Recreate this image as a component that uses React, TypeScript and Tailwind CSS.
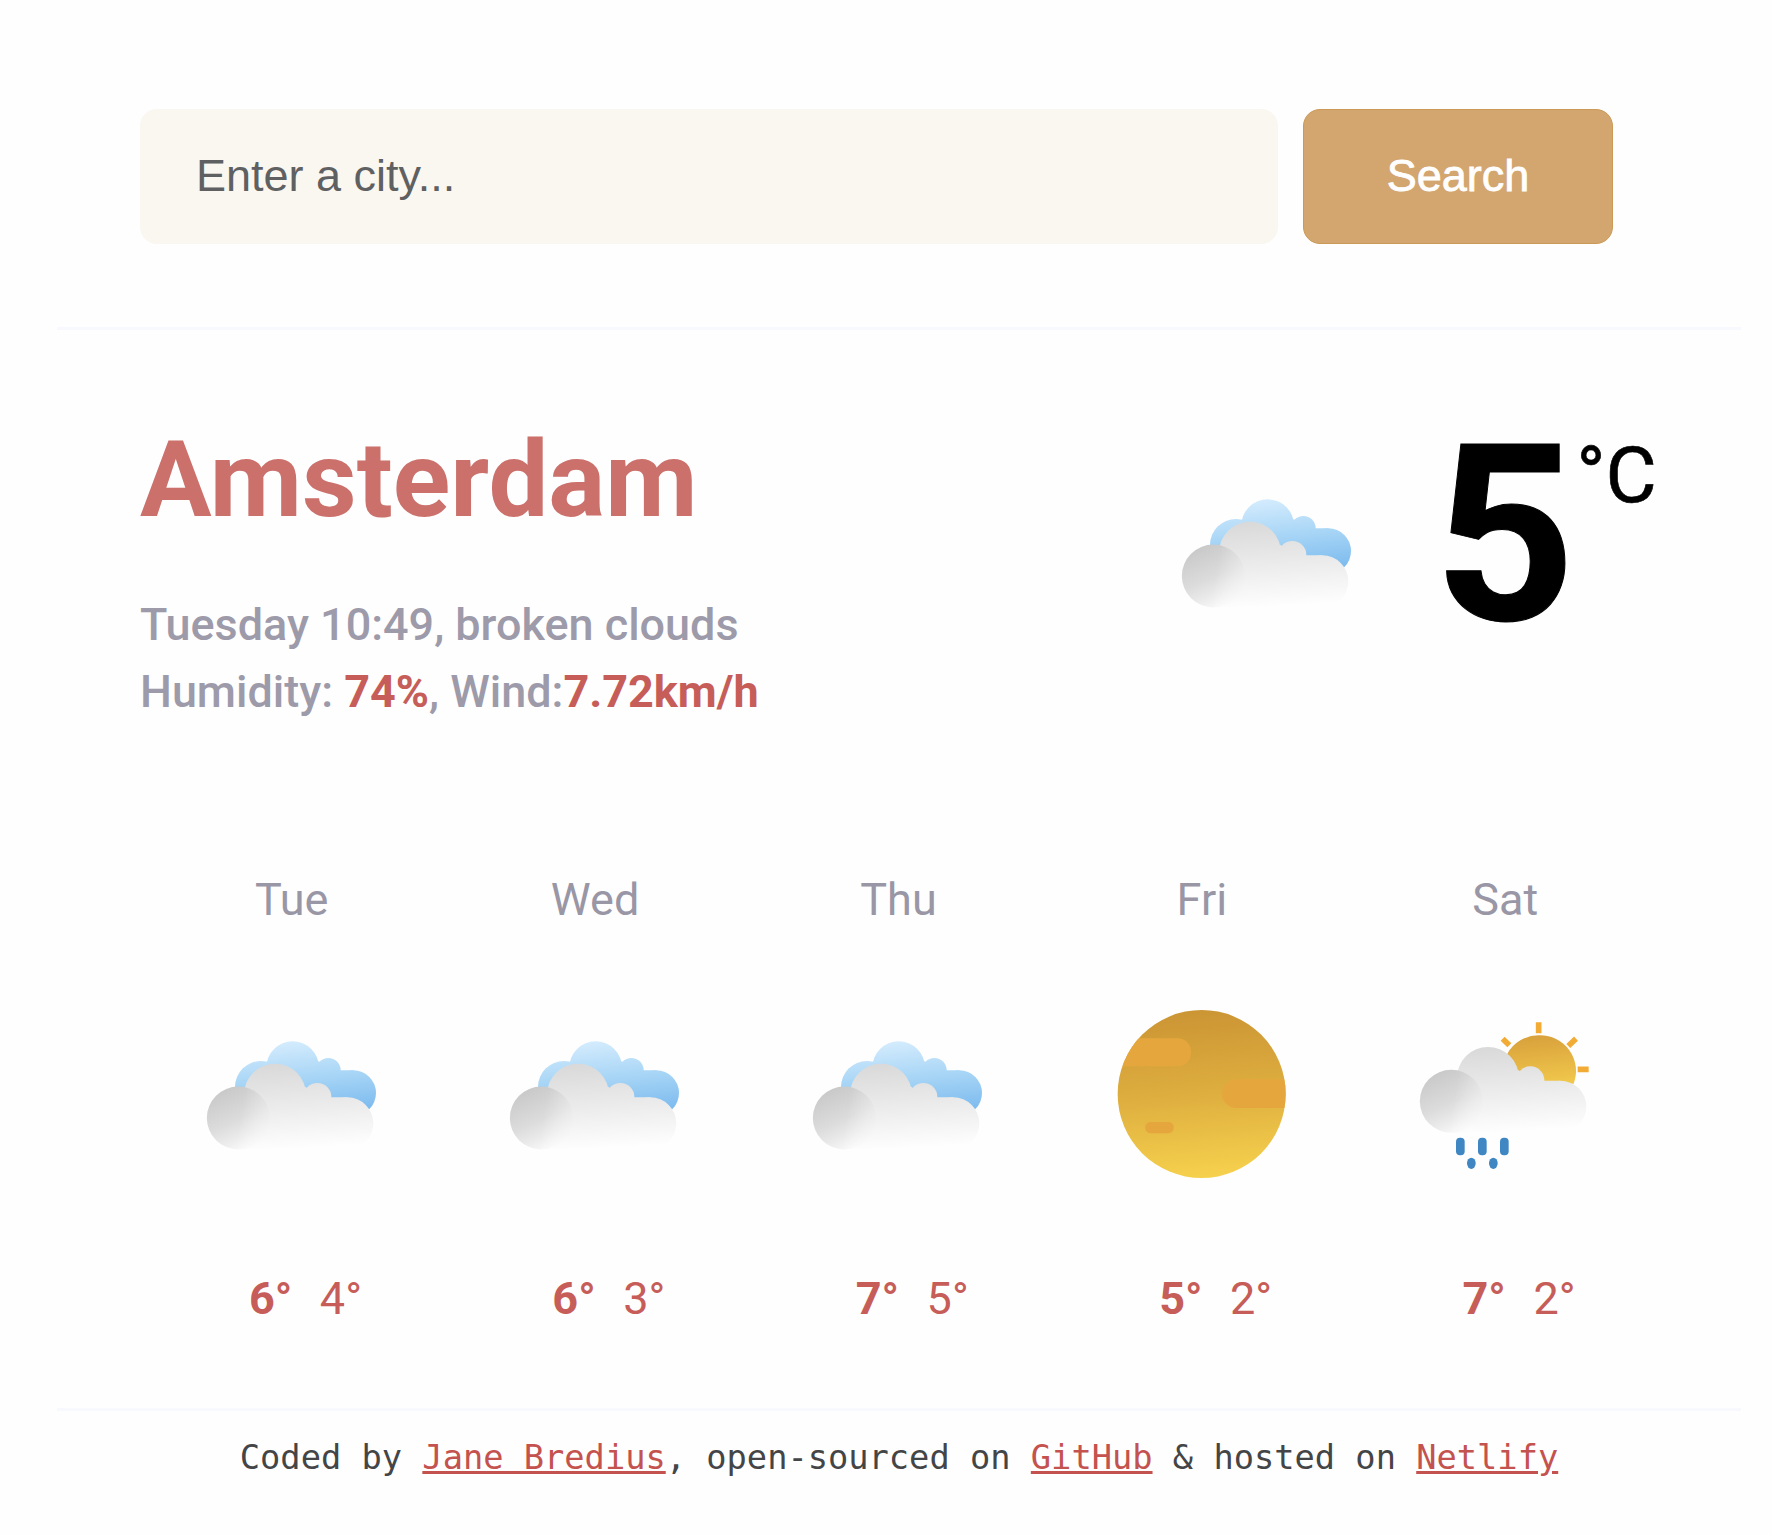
import React from "react";

type Kind = "clouds" | "clear" | "rain";

function Defs() {
  return (
    <svg width="0" height="0" className="absolute" aria-hidden="true">
      <defs>
        <linearGradient id="blue" gradientUnits="userSpaceOnUse" x1="340" y1="58" x2="360" y2="270">
          <stop offset="0" stopColor="#d3ebfd" />
          <stop offset="0.5" stopColor="#a9d6f6" />
          <stop offset="1" stopColor="#80bdef" />
        </linearGradient>
        <linearGradient id="grey" gradientUnits="userSpaceOnUse" x1="300" y1="125" x2="315" y2="382">
          <stop offset="0" stopColor="#d9d9d9" />
          <stop offset="0.55" stopColor="#ededed" />
          <stop offset="1" stopColor="#fefefe" />
        </linearGradient>
        <linearGradient id="puff" gradientUnits="userSpaceOnUse" x1="125" y1="200" x2="205" y2="380">
          <stop offset="0" stopColor="#c9c9c9" />
          <stop offset="0.5" stopColor="#dcdcdc" />
          <stop offset="0.75" stopColor="#ebebeb" />
          <stop offset="1" stopColor="#fcfcfc" />
        </linearGradient>
        <linearGradient id="fade" gradientUnits="userSpaceOnUse" x1="170" y1="280" x2="262" y2="295">
          <stop offset="0" stopColor="#fff" />
          <stop offset="1" stopColor="#000" />
        </linearGradient>
        <mask id="puffMask" maskUnits="userSpaceOnUse" x="0" y="0" width="660" height="630">
          <rect width="660" height="630" fill="url(#fade)" />
        </mask>
        <linearGradient id="disc" x1="0.46" y1="0" x2="0.54" y2="1">
          <stop offset="0" stopColor="#cb9534" />
          <stop offset="0.5" stopColor="#deae3f" />
          <stop offset="1" stopColor="#f6d14d" />
        </linearGradient>
        <linearGradient id="sun" gradientUnits="userSpaceOnUse" x1="410" y1="105" x2="425" y2="250">
          <stop offset="0" stopColor="#d8a13c" />
          <stop offset="1" stopColor="#f0c64b" />
        </linearGradient>
        <clipPath id="discClip">
          <circle cx="335" cy="312" r="252" />
        </clipPath>
      </defs>
    </svg>
  );
}

function GreyCloud() {
  return (
    <g>
      <g fill="url(#grey)">
        <circle cx="270" cy="218" r="93" />
        <circle cx="397" cy="225" r="42" />
        <circle cx="487" cy="304" r="78" />
        <path d="M160 382L180 215H300L361 194L400 226H487V382Z" />
      </g>
      <circle cx="160" cy="288" r="94.5" fill="url(#puff)" mask="url(#puffMask)" />
    </g>
  );
}

function WeatherIcon({ kind }: { kind: Kind }) {
  return (
    <svg viewBox="0 0 660 630" className="h-[210px] w-[220px] shrink-0">
      {kind === "clouds" && (
        <g transform="translate(9 96)">
          <g fill="url(#blue)">
            <circle cx="228" cy="195" r="78" />
            <circle cx="323" cy="137" r="79" />
            <circle cx="430" cy="145" r="37" />
            <circle cx="505" cy="213" r="68" />
            <path d="M228 195L250 118H400L440 145H505V260H228Z" />
          </g>
          <GreyCloud />
        </g>
      )}
      {kind === "clear" && (
        <g transform="translate(-6 0)">
          <circle cx="335" cy="312" r="252" fill="url(#disc)" />
          <g clipPath="url(#discClip)" fill="#e5a73d">
            <rect x="0" y="145" width="303" height="84" rx="40" />
            <rect x="396" y="268" width="300" height="86" rx="43" />
            <rect x="166" y="396" width="85" height="34" rx="15" />
          </g>
        </g>
      )}
      {kind === "rain" && (
        <g transform="translate(12 31)">
          <path d="M418 105A107 107 0 0 1 524 250H325V160A107 107 0 0 1 418 105Z" fill="url(#sun)" />
          <g stroke="#f2ac36" strokeWidth="17">
            <path d="M419 66V99M536 207H569M311 115L331 135M531 115L508 137" />
          </g>
          <g transform="translate(-3 15)">
            <GreyCloud />
          </g>
          <g fill="#3f87c2">
            <rect x="171" y="412" width="26" height="53" rx="12" />
            <rect x="237" y="412" width="26" height="53" rx="12" />
            <rect x="303" y="412" width="26" height="53" rx="12" />
            <ellipse cx="217" cy="489" rx="13" ry="17" />
            <ellipse cx="283" cy="489" rx="13" ry="17" />
          </g>
        </g>
      )}
    </svg>
  );
}

const days: { day: string; kind: Kind; max: number; min: number }[] = [
  { day: "Tue", kind: "clouds", max: 6, min: 4 },
  { day: "Wed", kind: "clouds", max: 6, min: 3 },
  { day: "Thu", kind: "clouds", max: 7, min: 5 },
  { day: "Fri", kind: "clear", max: 5, min: 2 },
  { day: "Sat", kind: "rain", max: 7, min: 2 },
];

export default function App() {
  return (
    <main className="flex h-[1535px] w-[1772px] flex-col overflow-hidden bg-[#fefefe] pl-[57px] font-['Roboto',sans-serif]">
      <Defs />
      <form
        className="flex h-[330px] w-[1684px] gap-[25px] border-b-[3px] border-[#f8f8ff] pt-[109px] pl-[83px] font-['Liberation_Sans',sans-serif] text-[45px]"
        onSubmit={(e) => e.preventDefault()}
      >
        <input
          type="search"
          placeholder="Enter a city..."
          className="h-[135px] w-[1138px] rounded-[17px] bg-[#faf7f0] px-[56px] pb-[1px] text-[#5f6061] outline-none placeholder:text-[#5f6061] placeholder:opacity-100"
        />
        <button
          type="submit"
          className="h-[135px] w-[310px] rounded-[17px] border border-[#cc9a57] bg-[#d3a66f] pb-[2px] text-white [-webkit-text-stroke:0.8px_white]"
        >
          Search
        </button>
      </form>

      <section className="flex h-[536px] pl-[83px]">
        <div className="w-[1017px] pt-[90px]">
          <h1 className="text-[106.5px] leading-[120px] font-bold text-[#cb706b]">Amsterdam</h1>
          <div className="mt-[52px] text-[44.95px] leading-[66.5px] font-medium whitespace-nowrap text-[#9d9aaa]">
            <p>Tuesday 10:49, broken clouds</p>
            <p>
              Humidity: <strong className="font-bold text-[#c65d58]">74%</strong>, Wind:
              <strong className="font-bold text-[#c65d58]">7.72km/h</strong>
            </p>
          </div>
        </div>
        <div className="flex items-start">
          <div className="pt-[118px]">
            <WeatherIcon kind="clouds" />
          </div>
          <div className="ml-[57px] pt-[83px] text-[246px] leading-[246px] font-bold text-black [-webkit-text-stroke:1px_black]">5</div>
          <div className="ml-[1px] pt-[105px] text-[78.7px] leading-[80px] text-black [-webkit-text-stroke:0.6px_black]">°C</div>
        </div>
      </section>

      <section className="grid h-[542px] w-[1600px] grid-cols-[repeat(5,303.4px)] pl-[83px] text-[45px] leading-[67px]">
        {days.map((d) => (
          <div key={d.day} className="flex flex-col items-center">
            <div className="text-[#9996a6]">{d.day}</div>
            <div className="mt-[57px]">
              <WeatherIcon kind={d.kind} />
            </div>
            <div className="mt-[65px] flex gap-[27.5px] pl-[27.5px] text-[#c65d58]">
              <span className="font-bold">{d.max}°</span>
              <span>{d.min}°</span>
            </div>
          </div>
        ))}
      </section>

      <footer className="w-[1684px] border-t-[3px] border-[#f8f8ff] pt-[22px] text-center font-['DejaVu_Sans_Mono',monospace] text-[33.7px] leading-[50px] whitespace-nowrap text-[#444547]">
        Coded by{" "}
        <a href="#" className="text-[#c4524e] underline decoration-[3px]">Jane Bredius</a>, open-sourced on{" "}
        <a href="#" className="text-[#c4524e] underline decoration-[3px]">GitHub</a> &amp; hosted on{" "}
        <a href="#" className="text-[#c4524e] underline decoration-[3px]">Netlify</a>
      </footer>
    </main>
  );
}
